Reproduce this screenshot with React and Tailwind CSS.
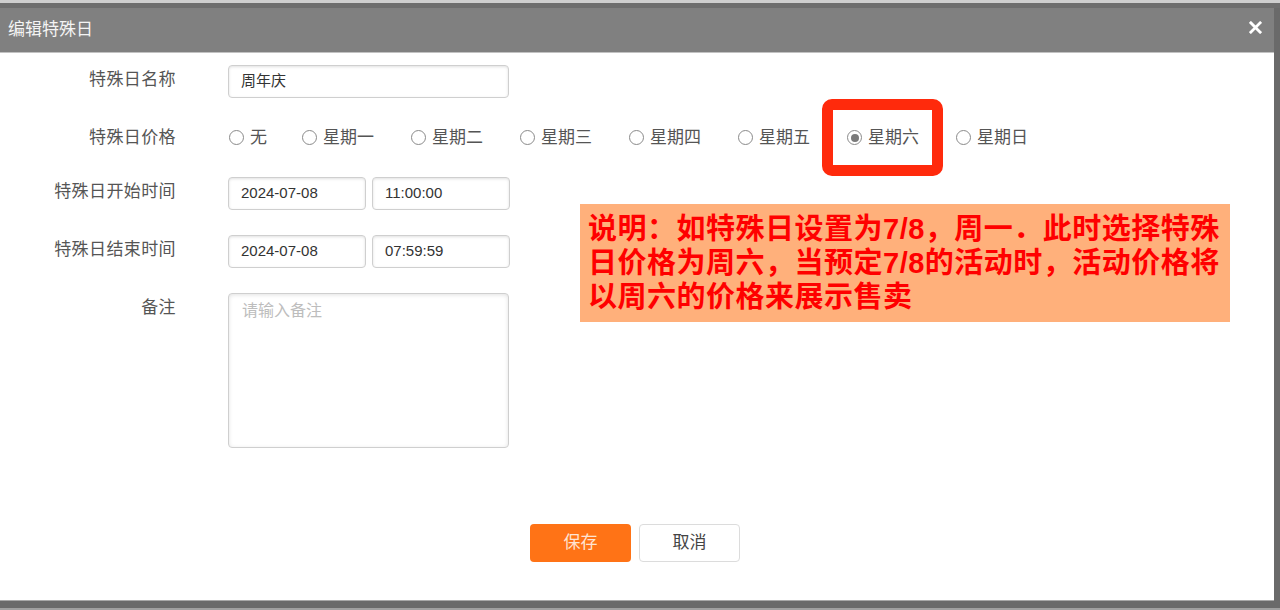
import React from "react";

const FONT = "font-['Liberation_Sans','Noto_Sans_CJK_SC',sans-serif]";

function Label({ children, pt = "pt-[3px]" }) {
  return (
    <div className={`w-[176px] shrink-0 text-right text-[17px] leading-[24px] text-[#555] tracking-[0.4px] ${pt}`}>
      {children}
    </div>
  );
}

function Field({ value, w = "w-[281px]" }) {
  return (
    <div
      className={`${w} h-[33px] rounded-[4px] border border-[#cfcfcf] bg-white shadow-[inset_0_1px_3px_rgba(0,0,0,0.12)] flex items-center pl-[12px] text-[15px] text-[#333]`}
    >
      {value}
    </div>
  );
}

function Radio({ label, checked }) {
  return (
    <div className="flex items-center">
      <span className="w-[15px] h-[15px] rounded-full border border-[#8a8a8a] bg-white flex items-center justify-center">
        {checked && <span className="w-[8px] h-[8px] rounded-full bg-[#7a7a7a]" />}
      </span>
      <span className="ml-[6px] text-[17px] leading-[24px] text-[#555]">{label}</span>
    </div>
  );
}

export default function App() {
  const days = ["星期一", "星期二", "星期三", "星期四", "星期五", "星期六", "星期日"];
  return (
    <div className={`relative w-[1280px] h-[610px] overflow-hidden bg-[#6b6b6b] flex flex-col ${FONT}`}>
      <div className="h-[3px] bg-[#cfcfcf] shrink-0" />
      <div className="h-[5px] bg-[#6e6e6e] shrink-0" />
      <div className="flex flex-1 min-h-0">
        <div className="w-[1274px] flex flex-col">
          <div className="h-[45px] bg-[#808080] border-b border-[#c2c2c2] flex items-center justify-between pl-[8px] pr-[12px] shrink-0">
            <span className="text-[17px] text-[#f4f4f4]">编辑特殊日</span>
            <svg width="13" height="13" viewBox="0 0 14 14" className="mt-[-5px]">
              <path d="M2 2 L12 12 M12 2 L2 12" stroke="#ffffff" strokeWidth="3" strokeLinecap="square" />
            </svg>
          </div>
          <div className="flex-1 bg-white flex flex-col pt-[12px]">
            <div className="flex items-start h-[33px] mb-[23px]">
              <Label>特殊日名称</Label>
              <div className="ml-[52px]">
                <Field value="周年庆" />
              </div>
            </div>
            <div className="flex items-center h-[33px] mb-[23px]">
              <Label pt="pt-[0px]">特殊日价格</Label>
              <div className="ml-[53px] flex items-center gap-[37px]">
                <div className="mr-[-2px]">
                  <Radio label="无" />
                </div>
                {days.map((d) => (
                  <Radio key={d} label={d} checked={d === "星期六"} />
                ))}
              </div>
            </div>
            <div className="flex items-start h-[33px] mb-[25px]">
              <Label>特殊日开始时间</Label>
              <div className="ml-[52px] flex gap-[6px]">
                <Field value="2024-07-08" w="w-[138px]" />
                <Field value="11:00:00" w="w-[138px]" />
              </div>
            </div>
            <div className="flex items-start h-[33px] mb-[25px]">
              <Label>特殊日结束时间</Label>
              <div className="ml-[52px] flex gap-[6px]">
                <Field value="2024-07-08" w="w-[138px]" />
                <Field value="07:59:59" w="w-[138px]" />
              </div>
            </div>
            <div className="flex items-start">
              <Label>备注</Label>
              <div className="ml-[52px] w-[281px] h-[155px] rounded-[4px] border border-[#cfcfcf] bg-white shadow-[inset_0_1px_4px_rgba(0,0,0,0.12)] pl-[13px] pt-[5px] text-[16px] leading-[24px] text-[#bdbdbd]">
                请输入备注
              </div>
            </div>
            <div className="flex justify-center gap-[8px] pr-[4px] mt-[76px]">
              <button className="w-[101px] h-[38px] rounded-[4px] bg-[#ff7316] text-[17px] text-[#ffe3d2]">保存</button>
              <button className="w-[101px] h-[38px] rounded-[4px] border border-[#dcdcdc] bg-white text-[17px] text-[#444]">取消</button>
            </div>
          </div>
          <div className="h-[1px] bg-[#a8a8a8] shrink-0" />
        </div>
        <div className="flex-1 bg-[#6a6a6a]" />
      </div>
      <div className="h-[7px] bg-[#6a6a6a] shrink-0" />
      <div className="h-[2px] bg-[#a0a0a0] shrink-0" />

      {/* annotation: red highlight box */}
      <div className="absolute left-[822px] top-[99px] w-[121px] h-[77px] rounded-[10px] border-[11px] border-[#ff2a0c]" />

      {/* annotation: note box */}
      <div className="absolute left-[580px] top-[204px] w-[650px] h-[118px] bg-[#ffb07b] pl-[8px] pt-[8px] text-[29px] leading-[34px] font-bold text-[#ff0000] tracking-[0.5px] whitespace-nowrap">
        说明：如特殊日设置为7/8，周一．此时选择特殊
        <br />
        日价格为周六，当预定7/8的活动时，活动价格将
        <br />
        以周六的价格来展示售卖
      </div>
    </div>
  );
}
